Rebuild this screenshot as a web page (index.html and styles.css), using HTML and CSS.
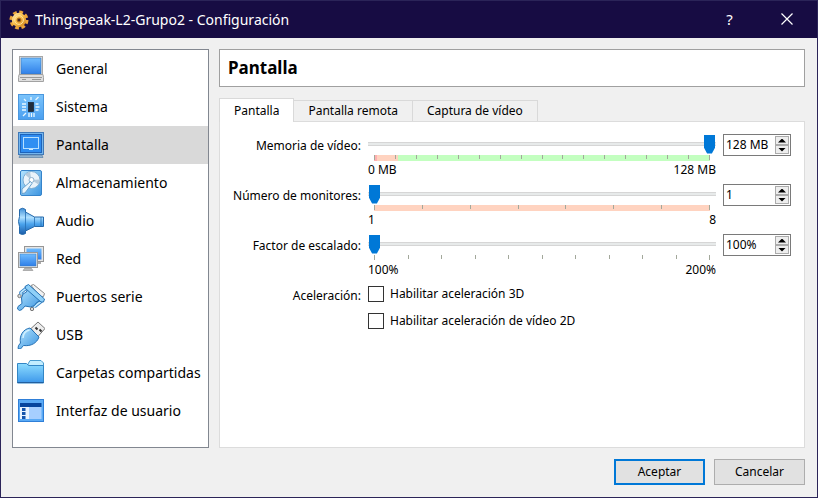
FILE: index.html
```
<!DOCTYPE html>
<html lang="es">
<head>
<meta charset="utf-8">
<title>Thingspeak-L2-Grupo2 - Configuración</title>
<link rel="stylesheet" href="styles.css">
</head>
<body>
<svg class="defs" width="0" height="0" aria-hidden="true">
  <defs>
    <linearGradient id="blue" x1="0" y1="0" x2="0" y2="1"><stop offset="0" stop-color="#6fbcff"/><stop offset="1" stop-color="#2f7fe8"/></linearGradient>
    <linearGradient id="chip" x1="0" y1="0" x2="0" y2="1"><stop offset="0" stop-color="#7cc4fb"/><stop offset="1" stop-color="#4a9ff0"/></linearGradient>
    <linearGradient id="sky" x1="0" y1="0" x2="1" y2="1"><stop offset="0" stop-color="#b5e5ff"/><stop offset="1" stop-color="#3b94e0"/></linearGradient>
    <linearGradient id="folder" x1="0" y1="0" x2="0" y2="1"><stop offset="0" stop-color="#8ddcff"/><stop offset="1" stop-color="#3c97ea"/></linearGradient>
    <linearGradient id="cone" x1="0" y1="0" x2="0" y2="1"><stop offset="0" stop-color="#3f8fd8"/><stop offset=".35" stop-color="#b0e0ff"/><stop offset=".6" stop-color="#4ba4ee"/><stop offset="1" stop-color="#1b5ca8"/></linearGradient>
    <linearGradient id="gold" x1="0" y1="0" x2="1" y2="1"><stop offset="0" stop-color="#ffedb0"/><stop offset=".5" stop-color="#f7bd4a"/><stop offset="1" stop-color="#c87a18"/></linearGradient>
  </defs>
</svg>
<div class="window">
  <header class="titlebar">
    <svg class="app-icon" viewBox="0 0 20 20" aria-hidden="true">
      <circle cx="10" cy="10" r="7.700" fill="none" stroke="#eda63a" stroke-width="3.600" stroke-dasharray="3.600 2.450"/>
      <circle cx="10" cy="10" r="7.200" fill="url(#gold)"/>
      <circle cx="10" cy="10" r="4.400" fill="none" stroke="#ffe096"/>
      <circle cx="10" cy="10" r="2" fill="#4a2a20" stroke="#c27a18"/>
    </svg>
    <h1 class="title">Thingspeak-L2-Grupo2 - Configuración</h1>
    <button class="caption" type="button" aria-label="Ayuda">?</button>
    <button class="caption" type="button" aria-label="Cerrar"><svg width="12" height="12" viewBox="0 0 12 12"><path d="M.5.5l11 11M11.5.5l-11 11" stroke="#fff" stroke-width="1.200"/></svg></button>
  </header>
  <div class="content">
    <nav class="sidebar">
      <a class="item" href="#general"><svg viewBox="0 0 28 28"><rect x="2.500" y="1.500" width="23" height="18" fill="#e6e6e6" stroke="#a7a7a7"/><rect x="4" y="3" width="20" height="16" fill="url(#blue)" stroke="#3975b5" stroke-width=".6"/><path d="M2 19.500h24l.5 3v4h-25v-4z" fill="#dedede" stroke="#a2a2a2"/><path d="M3 22.500h22M5 24.500h4M15 24.500h9" stroke="#999"/></svg>General</a>
      <a class="item" href="#sistema"><svg viewBox="0 0 28 28"><rect x="1.500" y="1.500" width="25" height="25" fill="url(#chip)" stroke="#4a97de"/><rect x="11.500" y="9.500" width="5" height="9" fill="#222d3b" stroke="#142030" stroke-width=".7"/><path d="M5 11h4M5 14h4M5 17h4M18.500 11h3M18.500 14h4M18.500 17h3M14 4v3M18.500 7l3-3M9 8L7 6M12 20v4M14.500 20v4M17 20v4M9 20l-3 3" stroke="#e8f7ff" stroke-width="1.300"/></svg>Sistema</a>
      <a class="item selected" href="#pantalla" aria-current="page"><svg viewBox="0 0 28 28"><rect x="1.500" y="1.500" width="25" height="22" fill="#74b6ee" stroke="#3f79b8"/><rect x="3.500" y="3.500" width="21" height="18" fill="#2e8cf1" stroke="#1e63ba"/><rect x="6.500" y="6.500" width="15" height="11" fill="#308ff2" stroke="#b7e0ff"/><path d="M12 18.500h4" stroke="#c9e9ff"/><path d="M3 24h22l1 2.500H2z" fill="#8fb2d0" stroke="#5a80a5" stroke-width=".7"/></svg>Pantalla</a>
      <a class="item" href="#almacenamiento"><svg viewBox="0 0 28 28"><rect x="3.500" y="1.500" width="21" height="25" rx="1.500" fill="url(#sky)" stroke="#3583ca"/><circle cx="14.500" cy="11" r="8.500" fill="#eaf3fa" stroke="#7badd3"/><path d="M14.500 11L8 5.500A8 8 0 0113 3zM14.500 11l7 4.500a8 8 0 001-5z" fill="#b6cbdc"/><circle cx="14.500" cy="11" r="2.500" fill="#fff" stroke="#8eb2cf"/><path d="M13.500 12.500L5 20v4.500l3-.5 7-9.500z" fill="#eaf5fc" stroke="#6aa1cc"/></svg>Almacenamiento</a>
      <a class="item" href="#audio"><svg viewBox="0 0 28 28"><path d="M2.500 9.500V2.500Q5.500 0 8.500 2.500V5L17.500 10h9v9.500h-9L8.500 24v2.500q-3 2-6 0v-7q-2-5 0-10z" fill="url(#cone)" stroke="#2569ab"/><path d="M8.500 5v19M17.500 10v9.500M24 10v9" stroke="#266eb3" stroke-width=".8"/></svg>Audio</a>
      <a class="item" href="#red"><svg viewBox="0 0 28 28"><rect x="7.500" y="1.500" width="19" height="15" fill="#e5e5e5" stroke="#969696"/><rect x="9.500" y="3.500" width="15" height="11" fill="url(#blue)"/><path d="M20 17h4v2h-4z" fill="#aaa"/><rect x="1.500" y="7.500" width="19" height="15" fill="#e9e9e9" stroke="#999"/><rect x="3" y="9" width="16" height="12" fill="url(#blue)" stroke="#397bc0" stroke-width=".5"/><path d="M8 23h6l2 2.500H6z" fill="#bcbcbc" stroke="#8d8d8d" stroke-width=".6"/></svg>Red</a>
      <a class="item" href="#serie"><svg viewBox="0 0 28 28"><path d="M14 2.500l2.500-1 11 9-1 3-3 .5z" fill="#f2f2f2" stroke="#888"/><circle cx="2.500" cy="13" r="1.700" fill="#ddd" stroke="#777"/><circle cx="15" cy="26" r="1.700" fill="#ddd" stroke="#777"/><path d="M9.500 5L4 9.500v2M24.500 18l-7 5.500v1" fill="none" stroke="#3984c7" stroke-width="3.500"/><path d="M9.500 5L4 9.500v2M24.500 18l-7 5.500v1" fill="none" stroke="#c2eaff" stroke-width="1.600"/><path d="M10.500 5.500L24 17.500l-4.500 2-2 3-4 1.500-5.500-1-3 3.500-2.500 1-2-1.500.5-2.500 4-3L4.500 15 6 11l3.500-2z" fill="url(#sky)" stroke="#2672b5"/><path d="M8 3.500l3.500-2L27.500 16l-1 3h-2.500L8.500 5.500z" fill="#8fd0f8" stroke="#2672b5"/></svg>Puertos serie</a>
      <a class="item" href="#usb"><svg viewBox="0 0 28 28"><path d="M14 7.500l7-6.500 7 6.500-7 8z" fill="#ededed" stroke="#777"/><path d="M18.500 6.500l2 2M22.500 8.500l2 2" stroke="#333" stroke-width="2"/><path d="M13 7l9 9c-2 6-8 9.500-15.500 8.500l-3 3.500-2.500-.5.500-3L3.500 22C2 15 6 8 13 7z" fill="url(#sky)" stroke="#2672b5"/><path d="M6 17c0-4 3-7 6.500-8" fill="none" stroke="#d0f0ff" stroke-width="1.500"/></svg>USB</a>
      <a class="item" href="#carpetas"><svg viewBox="0 0 28 28"><path d="M11 5l2-3.500h11L26.500 4v6H11z" fill="#c2edff" stroke="#4a9ccf"/><path d="M.5 4.500h9l2 2h15V24H.5z" fill="url(#folder)" stroke="#3386c5"/><path d="M.5 23.500h26" stroke="#225f9f"/></svg>Carpetas compartidas</a>
      <a class="item" href="#interfaz"><svg viewBox="0 0 28 28"><rect x="1.500" y="2.500" width="25" height="22" fill="#5aaaf5" stroke="#2f7fd8"/><rect x="3" y="6" width="21.500" height="4" fill="#07459d"/><rect x="3" y="10" width="9" height="12" fill="#e9f4ff"/><rect x="12" y="10" width="12.500" height="12" fill="#a6cfff"/><path d="M5 11h3.500v3H5zM5 15h3.500v3H5zM5 19h3.500v3H5z" fill="#1555ac"/></svg>Interfaz de usuario</a>
    </nav>
    <main class="main">
      <h2 class="heading">Pantalla</h2>
      <div class="tabs" role="tablist">
        <button class="tab active" type="button" role="tab" aria-selected="true">Pantalla</button>
        <button class="tab" type="button" role="tab" aria-selected="false">Pantalla remota</button>
        <button class="tab" type="button" role="tab" aria-selected="false">Captura de vídeo</button>
      </div>
      <form class="panel">
        <label class="label" for="mem">Memoria de vídeo:</label>
        <div class="scale">
          <input id="mem" type="range" min="0" max="128" value="128">
          <div class="ticks memory"><i></i><i></i><i></i><i></i><i></i><i></i><i></i><i></i><i></i><i></i><i></i><i></i><i></i><i></i><i></i><i></i><i></i></div>
          <div class="ends"><span>0 MB</span><span>128 MB</span></div>
        </div>
        <div class="spin"><input type="text" value="128 MB" aria-label="Memoria de vídeo"><div class="steps"><button type="button" class="up" aria-label="Aumentar"></button><button type="button" class="down" aria-label="Reducir"></button></div></div>

        <label class="label" for="mon">Número de monitores:</label>
        <div class="scale">
          <input id="mon" type="range" min="1" max="8" value="1">
          <div class="ticks monitors"><i></i><i></i><i></i><i></i><i></i><i></i><i></i><i></i></div>
          <div class="ends"><span>1</span><span>8</span></div>
        </div>
        <div class="spin"><input type="text" value="1" aria-label="Número de monitores"><div class="steps"><button type="button" class="up" aria-label="Aumentar"></button><button type="button" class="down" aria-label="Reducir"></button></div></div>

        <label class="label" for="esc">Factor de escalado:</label>
        <div class="scale">
          <input id="esc" type="range" min="100" max="200" value="100">
          <div class="ticks"><i></i><i></i><i></i><i></i><i></i><i></i><i></i><i></i><i></i><i></i><i></i></div>
          <div class="ends"><span>100%</span><span>200%</span></div>
        </div>
        <div class="spin"><input type="text" value="100%" aria-label="Factor de escalado"><div class="steps"><button type="button" class="up" aria-label="Aumentar"></button><button type="button" class="down" aria-label="Reducir"></button></div></div>

        <span class="label">Aceleración:</span>
        <div class="checks">
          <label class="check"><input type="checkbox">Habilitar aceleración 3D</label>
          <label class="check"><input type="checkbox">Habilitar aceleración de vídeo 2D</label>
        </div>
      </form>
    </main>
  </div>
  <footer class="footer">
    <button class="btn primary" type="button">Aceptar</button>
    <button class="btn" type="button">Cancelar</button>
  </footer>
</div>
</body>
</html>
```
FILE: styles.css
```
* { box-sizing: border-box; }
body {
  margin: 0;
  font: 12px/16px "Noto Sans", sans-serif;
  color: #000;
}
button, input { font: inherit; color: inherit; margin: 0; }
.defs { position: absolute; }
.window {
  min-height: 100vh;
  display: flex;
  flex-direction: column;
  background: #f0f0f0;
  border: 1px solid #2b2458;
}
.titlebar {
  display: flex;
  align-items: center;
  height: 37px;
  padding-left: 8px;
  background: #170c43;
  color: #fff;
}
.app-icon { width: 20px; height: 20px; margin-right: 6px; }
.title {
  flex: 1;
  margin: 0;
  font: 14px/20px "Noto Sans", sans-serif;
}
.caption {
  display: grid;
  place-items: center;
  width: 57px;
  height: 100%;
  padding: 0 4px 2px 0;
  border: 0;
  background: none;
  font: 15px/20px "Noto Sans", sans-serif;
}
.content {
  flex: 1;
  display: flex;
  gap: 10px;
  padding: 11px 12px 0 11px;
}
.sidebar {
  width: 197px;
  flex: none;
  border: 1px solid #828790;
  background: #fff;
}
.item {
  display: flex;
  align-items: center;
  gap: 11px;
  height: 38px;
  padding-left: 4px;
  color: #000;
  text-decoration: none;
  white-space: nowrap;
  font: 14px/20px "Noto Sans", sans-serif;
}
.item svg { width: 28px; height: 28px; flex: none; }
.selected { background: #d9d9d9; }
.main {
  flex: 1;
  min-width: 0;
  display: flex;
  flex-direction: column;
}
.heading {
  margin: 0 0 11px;
  padding: 8px;
  border: 1px solid #a0a0a0;
  background: #fff;
  font: bold 17px/20px "Noto Sans", sans-serif;
}
.tabs { display: flex; align-items: flex-end; height: 23px; }
.tab {
  height: 21px;
  padding: 0 14px;
  border: 1px solid #d9d9d9;
  border-width: 1px 1px 0 0;
  background: #f0f0f0;
}
.tab.active {
  height: 24px;
  margin-bottom: -1px;
  border-left-width: 1px;
  background: #fff;
  z-index: 1;
}
.panel {
  flex: 1;
  display: grid;
  grid-template-columns: 141px minmax(0, 1fr) 68px;
  grid-auto-rows: min-content;
  column-gap: 7px;
  padding: 12px 13px 0 0;
  border: 1px solid #dcdcdc;
  background: #fff;
}
.label { text-align: right; padding-top: 4px; white-space: nowrap; }
.scale { height: 50px; }
.scale input {
  display: block;
  appearance: none;
  width: 100%;
  height: 20px;
  padding: 0 1px;
  background: linear-gradient(#d6d6d6 0 1px, #e7eaea 1px 3px, #d6d6d6 3px 4px) 0 8px / 100% 4px no-repeat;
}
.scale input::-webkit-slider-thumb {
  appearance: none;
  width: 11px;
  height: 19px;
  background: #0078d7;
  clip-path: polygon(0 0, 100% 0, 100% 70%, 72% 100%, 28% 100%, 0 70%);
}
.ticks {
  display: flex;
  justify-content: space-between;
  height: 6px;
  margin: 1px 6px 0;
}
.ticks i { width: 1px; height: 4px; background: #a3a89b; }
.ticks i:first-child, .ticks i:last-child { height: 5px; }
.memory { background: linear-gradient(90deg, #ffb0b0 0 1%, #ffd3c0 1% 7%, #c3ffc0 7%); }
.monitors { background: #ffd3c0; }
.ends { display: flex; justify-content: space-between; padding-top: 1px; }
.spin {
  display: flex;
  height: 22px;
  border: 1px solid #7a7a7a;
  background: #fff;
}
.spin input {
  flex: 1;
  min-width: 0;
  padding: 0 0 0 2px;
  border: 0;
  background: none;
}
.steps { display: flex; flex-direction: column; padding: 1px; width: 16px; }
.steps button {
  flex: 1;
  display: grid;
  place-items: center;
  padding: 0;
  border: 1px solid #acacac;
  background: #eee;
}
.steps button::before { content: ""; width: 8px; height: 4px; background: #000; }
.up::before { clip-path: polygon(50% 0, 100% 100%, 0 100%); }
.down::before { clip-path: polygon(0 0, 100% 0, 50% 100%); }
.checks { display: flex; flex-direction: column; gap: 11px; padding-top: 2px; }
.check { display: flex; align-items: center; gap: 6px; white-space: nowrap; }
.check input {
  appearance: none;
  width: 16px;
  height: 16px;
  border: 1px solid #333;
  background: #fff;
}
.footer {
  display: flex;
  justify-content: flex-end;
  gap: 9px;
  padding: 11px 12px 12px;
}
.btn {
  width: 91px;
  height: 26px;
  padding: 0;
  border: 1px solid #adadad;
  background: #e1e1e1;
}
.primary { border: 2px solid #0078d7; }
```
